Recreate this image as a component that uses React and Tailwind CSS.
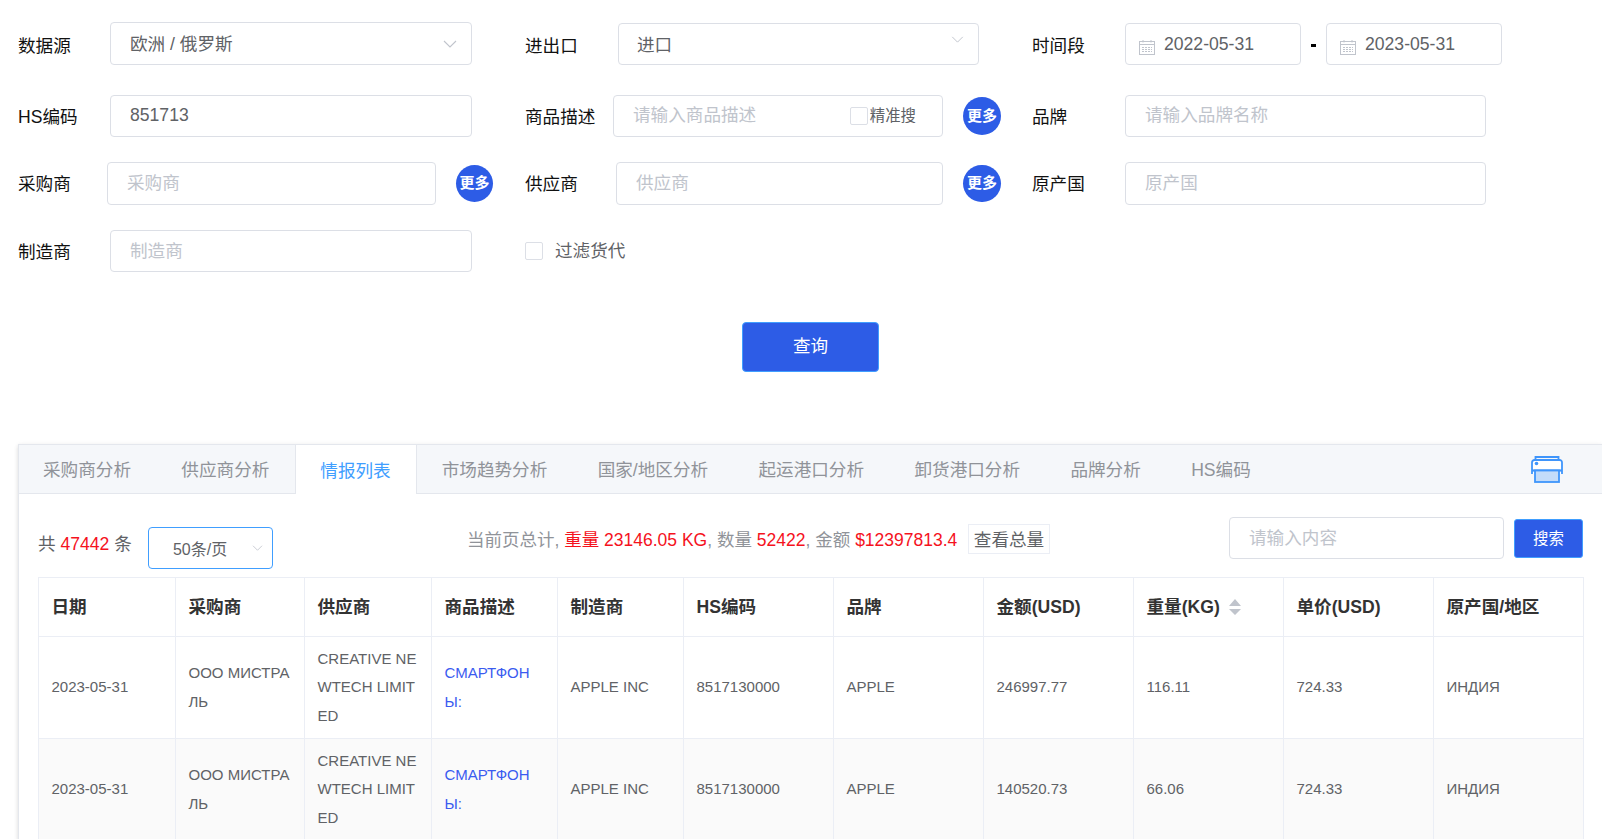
// App.jsx
const inputClass =
  "h-full w-full min-w-0 bg-transparent px-[19px] text-[17.6px] text-[#606266] outline-none placeholder:text-[#c0c4cc]";
const boxClass = "h-full rounded-[4px] border border-[#dcdfe6] bg-white";

const TABS = ["采购商分析", "供应商分析", "情报列表", "市场趋势分析", "国家/地区分析", "起运港口分析", "卸货港口分析", "品牌分析", "HS编码"];
const COLS = ["w-[137px]", "w-[129px]", "w-[127px]", "w-[126px]", "w-[126px]", "w-[150px]", "w-[150px]", "w-[150px]", "w-[150px]", "w-[150px]", "w-[150px]"];
const HEADERS = ["日期", "采购商", "供应商", "商品描述", "制造商", "HS编码", "品牌", "金额(USD)", "重量(KG)", "单价(USD)", "原产国/地区"];
const ROWS = [
  { amount: "246997.77", weight: "116.11" },
  { amount: "140520.73", weight: "66.06" },
];

function Chevron({ className }) {
  return (
    <svg viewBox="0 0 14 8" className={className} fill="none" stroke="#c0c4cc" strokeWidth="1.1">
      <path d="M1 1l6 6 6-6" />
    </svg>
  );
}

function Calendar() {
  return (
    <svg viewBox="0 0 16 16" className="mt-[5px] h-4 w-4 shrink-0" fill="none" stroke="#c0c4cc" strokeWidth="1">
      <rect x="0.5" y="2.5" width="15" height="13" />
      <path d="M0.5 5.5h15M4 1v2.5M12 1v2.5" />
      <path d="M3 8.5h10M3 10.5h10M3 12.5h10" strokeDasharray="2 1" />
    </svg>
  );
}

function Printer() {
  return (
    <svg viewBox="0 0 32 27" className="h-[27px] w-[32px]" fill="none" stroke="#3f95fb" strokeWidth="1.8">
      <path d="M4.5 4V1h23v3" />
      <path d="M1 18V6.5A2.5 2.5 0 0 1 3.500 4h25A2.500 2.500 0 0 1 31 6.500V18" fill="#fff" />
      <path d="M1 14.500h30" strokeWidth="2.200" />
      <rect x="4" y="14.500" width="24" height="11.500" fill="#c3dcfa" />
      <circle cx="5.500" cy="7.500" r="1.800" fill="#3f95fb" stroke="none" />
    </svg>
  );
}

function Label({ className, children }) {
  return (
    <div className={`shrink-0 text-[17.6px] leading-none text-[#111] ${className}`}>{children}</div>
  );
}

function MoreButton({ className }) {
  return (
    <div className={`ml-[20px] flex shrink-0 items-center justify-center rounded-full bg-[#2d5ce6] text-[15px] font-bold text-white ${className}`}>
      更多
    </div>
  );
}

function SelectBox({ value, className, chevron }) {
  return (
    <div className={`flex items-center justify-between pr-[14px] text-[17.6px] text-[#606266] ${boxClass} ${className}`}>
      <span className="pt-[2px]">{value}</span>
      {chevron}
    </div>
  );
}

function DateBox({ value }) {
  return (
    <div className={`flex w-[176px] items-center gap-[9px] pl-[13px] text-[17.6px] text-[#606266] ${boxClass}`}>
      <Calendar />
      <span className="mt-px">{value}</span>
    </div>
  );
}

export default function App() {
  return (
    <div className="h-[839px] overflow-hidden bg-white font-['Liberation_Sans','Noto_Sans_CJK_SC',sans-serif]">
      {/* Filter form */}
      <div className="pl-[18px] pt-[22px]">
        <div className="flex h-[43px]">
          <div className="flex w-[507px] items-center">
            <Label className="mt-[7px] w-[92px]">数据源</Label>
            <SelectBox value="欧洲 / 俄罗斯" className="w-[362px] pl-[19px]" chevron={<Chevron className="h-[8px] w-[14px]" />} />
          </div>
          <div className="flex w-[507px] items-center pt-px">
            <Label className="mt-[6px] w-[93px]">进出口</Label>
            <SelectBox value="进口" className="w-[361px] pl-[18px]" chevron={<Chevron className="-mt-[9px] h-[7px] w-[13px]" />} />
          </div>
          <div className="flex items-center pt-px">
            <Label className="mt-[6px] w-[93px]">时间段</Label>
            <DateBox value="2022-05-31" />
            <div className="mx-[10px] mt-[2px] h-[3px] w-[5px] bg-black" />
            <DateBox value="2023-05-31" />
          </div>
        </div>

        <div className="mt-[30px] flex h-[42px]">
          <div className="flex w-[507px] items-center">
            <Label className="mt-[3px] w-[92px]">HS编码</Label>
            <div className={`w-[362px] ${boxClass}`}>
              <input readOnly value="851713" className={`pb-[2px] ${inputClass}`} />
            </div>
          </div>
          <div className="flex w-[507px] items-center">
            <Label className="mt-[3px] w-[88px]">商品描述</Label>
            <div className={`flex w-[330px] items-center pr-[26px] ${boxClass}`}>
              <input readOnly placeholder="请输入商品描述" className={`pb-[2px] ${inputClass}`} />
              <div className="h-[18px] w-[18px] shrink-0 rounded-[2px] border border-[#dcdfe6]" />
              <span className="ml-[2px] shrink-0 text-[15.4px] text-[#606266]">精准搜</span>
            </div>
            <MoreButton className="h-[38px] w-[38px]" />
          </div>
          <div className="flex items-center">
            <Label className="mt-[3px] w-[93px]">品牌</Label>
            <div className={`w-[361px] ${boxClass}`}>
              <input readOnly placeholder="请输入品牌名称" className={`pb-[2px] ${inputClass}`} />
            </div>
          </div>
        </div>

        <div className="mt-[25px] flex h-[43px]">
          <div className="flex w-[507px] items-center">
            <Label className="mt-[3px] w-[89px]">采购商</Label>
            <div className={`w-[329px] ${boxClass}`}>
              <input readOnly placeholder="采购商" className={inputClass} />
            </div>
            <MoreButton className="h-[37px] w-[37px]" />
          </div>
          <div className="flex w-[507px] items-center">
            <Label className="mt-[3px] w-[91px]">供应商</Label>
            <div className={`w-[327px] ${boxClass}`}>
              <input readOnly placeholder="供应商" className={inputClass} />
            </div>
            <MoreButton className="h-[37px] w-[38px]" />
          </div>
          <div className="flex items-center">
            <Label className="mt-[3px] w-[93px]">原产国</Label>
            <div className={`w-[361px] ${boxClass}`}>
              <input readOnly placeholder="原产国" className={inputClass} />
            </div>
          </div>
        </div>

        <div className="mt-[25px] flex h-[42px]">
          <div className="flex w-[507px] items-center">
            <Label className="mt-[3px] w-[92px]">制造商</Label>
            <div className={`w-[362px] ${boxClass}`}>
              <input readOnly placeholder="制造商" className={inputClass} />
            </div>
          </div>
          <div className="flex items-center">
            <div className="h-[18px] w-[18px] rounded-[2px] border border-[#dcdfe6]" />
            <span className="ml-[12px] text-[17.6px] text-[#606266]">过滤货代</span>
          </div>
        </div>
      </div>

      <div className="mt-[50px] flex pl-[742px]">
        <button className="h-[50px] w-[137px] rounded-[4px] border border-[#409eff] bg-[#2d5ce6] pb-[2px] text-[17.6px] text-white">
          查询
        </button>
      </div>

      {/* Tabs panel */}
      <div className="ml-[18px] mt-[72px] border border-r-0 border-[#e4e7ed] bg-white shadow-[0_2px_4px_rgba(0,0,0,0.12),0_0_6px_rgba(0,0,0,0.04)]">
        <div className="flex h-[49px] border-b border-[#e4e7ed] bg-[#f5f7fa] pr-[39px]">
          <div className="-ml-[1.200px] flex">
            {TABS.map((tab) =>
              tab === "情报列表" ? (
                <div key={tab} className="-mb-px flex h-[49px] items-center border-x border-[#e4e7ed] bg-white px-[24.800px] pt-[3px] text-[17.6px] text-[#409eff]">
                  {tab}
                </div>
              ) : (
                <div key={tab} className="flex h-[48px] items-center px-[25.200px] pt-[3px] text-[17.6px] text-[#909399]">
                  {tab}
                </div>
              )
            )}
          </div>
          <div className="ml-auto flex items-center">
            <Printer />
          </div>
        </div>

        <div className="pl-[19px] pt-[23px]">
          {/* Toolbar */}
          <div className="flex h-[60px] items-start">
            <div className="flex w-[429px] items-start">
              <div className="mt-[14px] text-[17.6px] text-[#606266]">
                共 <span className="text-[#f5121d]">47442</span> 条
              </div>
              <div className="ml-[16px] mt-[10px] flex h-[42px] w-[125px] items-center justify-between rounded-[4px] border border-[#409eff] pl-[24px] pr-[9px] pt-[4px] text-[16px] text-[#606266]">
                <span>50条/页</span>
                <Chevron className="-mt-[4px] h-[6px] w-[11px]" />
              </div>
            </div>
            <div className="mt-[10px] w-[501px] whitespace-nowrap text-[17.5px] text-[#909399]">
              当前页总计, <span className="text-[#f5121d]">重量 23146.05 KG</span>, 数量{" "}
              <span className="text-[#f5121d]">52422</span>, 金额{" "}
              <span className="text-[#f5121d]">$12397813.4</span>
            </div>
            <div className="mt-[7px] flex h-[30px] w-[82px] items-center justify-center border border-[#ebeef5] pt-[2px] text-[17.6px] text-[#606266]">
              查看总量
            </div>
            <div className="ml-[179px] h-[42px] w-[275px] rounded-[4px] border border-[#dcdfe6]">
              <input readOnly placeholder="请输入内容" className={inputClass} />
            </div>
            <button className="ml-[10px] mt-[2px] h-[39px] w-[69px] rounded-[3px] border border-[#409eff] bg-[#2d5ce6] text-[15.4px] text-white">
              搜索
            </button>
          </div>

          {/* Data table */}
          <table className="w-[1545px] table-fixed border-collapse text-left">
            <colgroup>
              {COLS.map((col, i) => (
                <col key={i} className={col} />
              ))}
            </colgroup>
            <thead>
              <tr className="h-[59px]">
                {HEADERS.map((header) => (
                  <th key={header} className="border border-[#ebeef5] px-[12.5px] text-[17.6px] font-bold text-[#333]">
                    <span className="inline-flex items-center">
                      {header}
                      {header === "重量(KG)" && (
                        <svg viewBox="0 0 12 16" className="ml-[9px] h-[16px] w-[12px]" fill="#c0c4cc">
                          <path d="M6 0l6 7H0zM0 10h12l-6 6z" />
                        </svg>
                      )}
                    </span>
                  </th>
                ))}
              </tr>
            </thead>
            <tbody className="text-[15px] leading-[28.6px] text-[#606266]">
              {ROWS.map((row, i) => {
                const cells = ["APPLE INC", "8517130000", "APPLE", row.amount, row.weight, "724.33", "ИНДИЯ"];
                return (
                  <tr key={row.amount} className={i === 1 ? "h-[102px] bg-[#fafafa]" : "h-[102px]"}>
                    <td className="border border-[#ebeef5] px-[12.5px]">2023-05-31</td>
                    <td className="break-all border border-[#ebeef5] px-[12.5px]">ООО МИСТРАЛЬ</td>
                    <td className="break-all border border-[#ebeef5] px-[12.5px]">CREATIVE NEWTECH LIMITED</td>
                    <td className="break-all border border-[#ebeef5] px-[12.5px] text-[#3b5bf0]">СМАРТФОНЫ:</td>
                    {cells.map((cell, j) => (
                      <td key={j} className="border border-[#ebeef5] px-[12.5px]">
                        {cell}
                      </td>
                    ))}
                  </tr>
                );
              })}
            </tbody>
          </table>
        </div>
      </div>
    </div>
  );
}
